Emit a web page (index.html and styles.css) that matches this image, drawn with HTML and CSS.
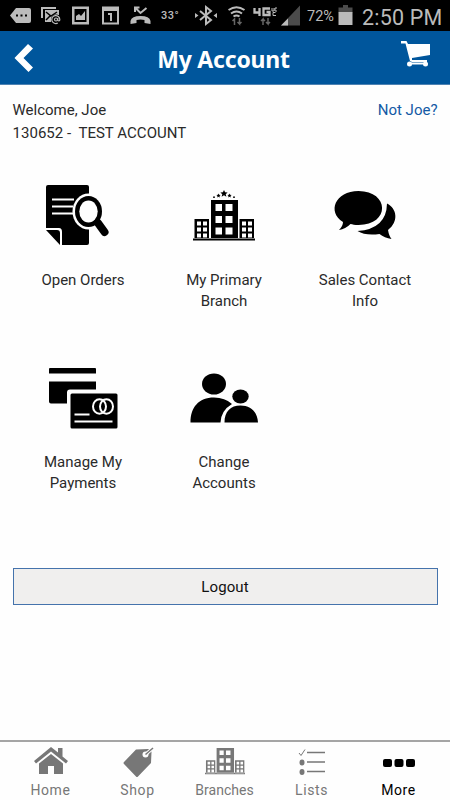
FILE: index.html
```html
<!DOCTYPE html>
<html lang="en">
<head>
<meta charset="utf-8">
<title>My Account</title>
<link rel="stylesheet" href="styles.css">
</head>
<body>
<svg class="defs" aria-hidden="true">
  <symbol id="building" viewBox="0 0 62 51">
    <path fill-rule="evenodd" d="M18 10h27v39h-27zM22.500 14v7h6.500v-7zM32.500 14v7h7v-7zM22.500 26v7h6.500v-7zM32.500 26v7h7v-7zM22.500 37.500v7h6.500v-7zM32.500 37.500v7h7v-7zM1.500 29h14.500v20h-14.500zM4 31.500v4h4v-4zM10 31.500v4h4v-4zM4 37.500v4h4v-4zM10 37.500v4h4v-4zM4 43.500v4h4v-4zM10 43.500v4h4v-4zM46.500 29h14.500v20h-14.500zM49 31.500v4h4v-4zM55 31.500v4h4v-4zM49 37.500v4h4v-4zM55 37.500v4h4v-4zM49 43.500v4h4v-4zM55 43.500v4h4v-4zM0 48.500h62v2h-62z"/>
  </symbol>
</svg>
<div class="status">
  <svg width="22" height="31" viewBox="10 0 22 31"><path d="M16 8h13q2 0 2 2v11q0 2-2 2h-13l-6-7.500z"/><path class="cut" d="M16 14.500h2v2h-2zm4.500 0h2v2h-2zm4.500 0h2v2h-2z"/></svg>
  <svg width="22" height="31" viewBox="41 0 22 31"><path d="M41 7h15v2h-13v9h-2z"/><path d="M45 10h14v5h-3l-5 7h-6z"/><path class="cut-line" d="M46 12l5 4 6-4M46 20l4-4"/><circle class="cut" cx="56" cy="19.500" r="5"/><g class="line"><circle cx="56" cy="19.500" r="1.500"/><path d="M57.800 18v2.500q2 1 2-1a4 4 0 1 0-2 3.500"/></g></svg>
  <svg width="18" height="31" viewBox="72 0 18 31"><path fill-rule="evenodd" d="M72 6.500h17v18h-17zM74.500 9v13h12v-13z"/><path d="M76 20v-4l3-2 2 2 4-5v9z"/></svg>
  <svg width="18" height="31" viewBox="102 0 18 31"><path fill-rule="evenodd" d="M102 6.500h17v18h-17zM104 11v11.500h13v-11.500z"/><path d="M108 13h4v8h-2v-6h-2z"/></svg>
  <svg width="22" height="31" viewBox="130 0 22 31"><path d="M130.500 21q1-5 10-5t10 5v3l-6-1v-3q-4-1-8 0v3l-6 1z"/><path class="line thick" d="M135 12v-4.500h4.500M135.500 8l5 5 6-5"/></svg>
  <span class="temp">33°</span>
  <svg width="22" height="31" viewBox="195 0 22 31"><path class="line thick" d="M200 11l11 9-5 4v-17l5 4-11 9"/><path d="M195 13l3.500 2.500-3.500 2.500zM217 13l-3.500 2.500 3.500 2.500z"/></svg>
  <svg width="18" height="31" viewBox="228 0 18 31"><path class="line thick" d="M228.500 10q8-5.500 16 0M231 13.500q5.500-4 11 0M233.500 16.500q3-2 6 0"/><path class="line dim" d="M234.500 25v-6l-2 2M239.500 18v6l-2-2m2 2l2-2"/></svg>
  <svg width="25" height="31" viewBox="253 0 25 31"><path class="line heavy" d="M254.500 8v4.500h6M259.500 8v8M270 8.500h-6.500v6.500h6v-3h-3"/><path class="line small" d="M272 8v3h2v-3M277 8h-2v3h2M275.500 12.500h-2.500v3h3"/><path class="line dim" d="M263 25v-6l-2 2m2-2l2 2M268 18v6l-2-2m2 2l2-2"/></svg>
  <svg width="20" height="31" viewBox="281 0 20 31"><path class="dark" d="M281 25.500l19-20v20z"/><path d="M281 25.500l7-7v7z"/></svg>
  <span class="percent">72%</span>
  <svg width="15" height="31" viewBox="338 0 15 31"><path class="dark" d="M343 5h5v2.500h4.500v5h-14v-5h4.500z"/><path d="M338.500 12h14v13h-14z"/></svg>
  <span class="clock">2:50 PM</span>
</div>
<header class="header">
  <svg width="24" height="32" viewBox="12 42 24 32"><path d="M28 44l5 4.500-9.500 9.500 9.500 9.500-4.500 4.500-14-14z"/></svg>
  <h1>My Account</h1>
  <svg width="34" height="32" viewBox="399 39 34 32"><path d="M401 41h5.500l1.500 3h22v11l-18 3v2h15v2h-15l-2-1-4.500-17.500h-4.500z"/><circle cx="409.500" cy="64" r="2.500"/><circle cx="425.500" cy="64" r="2.500"/><path d="M409 62.500h17v2h-17z"/></svg>
</header>
<main class="content">
  <div class="welcome">
    <p>Welcome, Joe<br><span class="account">130652 -&nbsp; TEST ACCOUNT</span></p>
    <a>Not Joe?</a>
  </div>
  <div class="tiles">
    <div class="tile">
      <svg viewBox="43 180 80 70"><path d="M48 185h39q2 0 2 2v56q0 2-2 2h-25v-13q0-4-3-4h-13v-41q0-2 2-2zM46 230h11q3 0 3 3v12z"/><path class="white-line" d="M52 199.500h22M52 206.500h21M52 213.500h21"/><ellipse class="white" cx="88.500" cy="211.500" rx="16" ry="18"/><path class="white-line halo" d="M98 223l8 10"/><ellipse cx="88.500" cy="211.500" rx="13.500" ry="15.500"/><ellipse class="white" cx="88.500" cy="211.500" rx="9.200" ry="11"/><path class="handle" d="M98 223l6.500 9"/></svg>
      <span>Open Orders</span>
    </div>
    <div class="tile">
      <svg viewBox="184 180 80 70"><use href="#building" x="193" y="190" width="62" height="51"/><path d="M224 190l1.100 2.300 2.500.2-1.900 1.700.7 2.500-2.400-1.400-2.400 1.400.7-2.500-1.900-1.700 2.500-.2zM218.500 193.500l.6 1.300 1.500.2-1.100 1 .3 1.500-1.300-.8-1.300.8.3-1.500-1.100-1 1.500-.2zM229.500 193.500l.6 1.300 1.500.2-1.100 1 .3 1.500-1.300-.8-1.300.8.3-1.500-1.100-1 1.500-.2z"/><circle cx="214" cy="197.200" r=".9"/><circle cx="234" cy="197.200" r=".9"/></svg>
      <span>My Primary<br>Branch</span>
    </div>
    <div class="tile">
      <svg viewBox="325 180 80 70"><path d="M387 203.500c10 5 12 18 1 26.500q1 6 3.500 9-7-1-12-5-14 2-22-3 29-2 29.500-27.500zM358.500 191c31 0 32 34 0 34-4 0-6-.5-8-1q-5 5-11.500 6 4-4 4-8c-16-10-8-31 15.500-31z"/></svg>
      <span>Sales Contact<br>Info</span>
    </div>
    <div class="tile">
      <svg viewBox="43 362.500 80 70"><path d="M50 367.500h45q1 0 1 1v4.500h-47v-4.500q0-1 1-1zM49 381h47v8h-26q-3 0-3 3v11h-16q-2 0-2-2zM72 393h44q1.500 0 1.500 1.500v32q0 1.500-1.500 1.500h-44q-1.500 0-1.500-1.500v-32q0-1.500 1.500-1.500z"/><path class="white-line" d="M74.500 414h15M74.500 421h38"/><g class="rings"><ellipse cx="99.500" cy="406" rx="6.500" ry="7.300"/><ellipse cx="106.500" cy="406" rx="6.500" ry="7.300"/></g></svg>
      <span>Manage My<br>Payments</span>
    </div>
    <div class="tile">
      <svg viewBox="184 362.500 80 70"><ellipse cx="214" cy="383.500" rx="12" ry="10.500"/><ellipse cx="240.500" cy="396" rx="8.200" ry="7"/><path d="M190.500 422c0-15 8-25 23.500-25q11 0 18 6.500-11 6.500-11.500 18.500zM224.500 422c0-11 6-17 16-17s17 6 17.500 17z"/></svg>
      <span>Change<br>Accounts</span>
    </div>
  </div>
  <button class="logout">Logout</button>
</main>
<nav class="tabs">
  <div class="tab"><svg viewBox="31 745 40 34"><path d="M51 747l7 5.500v-4.500h4.500v8.500l5.500 4.500-2 2.500-15-12-15 12-2-2.500zM51 754l12 9.500v10.500h-9v-8h-6v8h-9v-10.500z"/></svg><span>Home</span></div>
  <div class="tab"><svg viewBox="118 745 40 34"><path d="M136 749.500l12-.5q3 0 3.500 3l-.5 11-13 13.500q-1 1-2 0l-12-12.500q-1-1 0-2z"/><circle class="hole" cx="145.500" cy="754.500" r="3"/><path class="tag-gap" d="M145.500 754.500l7.500-6.500"/><path class="tag-line" d="M145.500 754.500l7.500-6.500"/></svg><span>Shop</span></div>
  <div class="tab branches"><svg viewBox="205 745 40 34"><use href="#building" x="205" y="741" width="40" height="34"/></svg><span>Branches</span></div>
  <div class="tab"><svg viewBox="292 745 40 34"><path class="tag-line" d="M307 752.500h18M307 762h18M307 771.500h18"/><path class="check" d="M299 753l2 2.500 4-6"/><ellipse cx="302" cy="762.500" rx="2.500" ry="3"/><ellipse cx="302" cy="772" rx="2.500" ry="3"/></svg><span>Lists</span></div>
  <div class="tab active"><svg viewBox="379 745 40 34"><rect x="383" y="759" width="9" height="8" rx="2"/><rect x="394.500" y="759" width="9" height="8" rx="2"/><rect x="406" y="759" width="9" height="8" rx="2"/></svg><span>More</span></div>
</nav>
</body>
</html>
```

FILE: styles.css
```css
* { box-sizing: border-box; }
body {
  margin: 0;
  width: 450px;
  height: 800px;
  display: flex;
  flex-direction: column;
  background: #fefefe;
  color: #2a2a2a;
  font: 15px/21px Roboto, sans-serif;
  overflow: hidden;
}
svg { display: block; }
.defs { width: 0; height: 0; position: absolute; }
.status {
  height: 31px;
  flex: none;
  padding-left: 10px;
  display: grid;
  grid-template-columns: 31px 31px 30px 28px 31px 34px 33px 25px 28px 26px 31px 24px 88px;
  background: #000;
  color: #bbb;
  fill: #bbb;
  line-height: 31px;
  white-space: nowrap;
}
.cut { fill: #000; }
.cut-line { fill: none; stroke: #000; stroke-width: 1.5; }
.line { fill: none; stroke: #bbb; stroke-width: 1.2; }
.thick { stroke-width: 2; }
.heavy { stroke-width: 2.3; }
.small { stroke-width: 1; }
.dim { stroke: #666; stroke-width: 1.5; }
.dark { fill: #4b4b4b; }
.temp { font-size: 11px; font-weight: 500; letter-spacing: .5px; }
.percent { font-size: 14.5px; line-height: 33px; }
.clock { font-size: 21.5px; line-height: 35px; letter-spacing: .2px; }
.header {
  height: 54px;
  flex: none;
  padding: 0 17px 0 12px;
  display: grid;
  grid-template-columns: 34px 1fr 34px;
  background: #00569c;
  border-bottom: 1px solid #4e82b2;
  fill: #fff;
}
.header svg { margin-top: 11px; }
.header svg:last-child { margin-top: 8px; }
.header h1 {
  margin: 0;
  padding-left: 2px;
  color: #fff;
  font: bold 23px/57px "Noto Sans", sans-serif;
  letter-spacing: -.2px;
  text-align: center;
}
.content { flex: 1; padding: 14px 12.5px 0; }
.welcome { display: flex; justify-content: space-between; line-height: 22.5px; }
.welcome p { margin: 0; }
.welcome a { color: #135aa5; }
.account { letter-spacing: .03px; }
.tiles {
  margin-top: 36px;
  display: grid;
  grid-template-columns: repeat(3, 141px);
  grid-auto-rows: 182.5px;
}
.tile { display: flex; flex-direction: column; align-items: center; text-align: center; }
.tile svg { width: 80px; height: 70px; margin-bottom: 19.5px; fill: #000; }
.tile .white { fill: #fefefe; }
.white-line { fill: none; stroke: #fefefe; stroke-width: 2.2; }
.halo { stroke-width: 11; stroke-linecap: round; }
.handle { fill: none; stroke: #000; stroke-width: 8; stroke-linecap: round; }
.rings { fill: none; stroke: #fefefe; stroke-width: 2; }
.logout {
  display: block;
  width: 425px;
  height: 37px;
  margin-top: 23px;
  padding: 0;
  border: 1px solid #4573ac;
  background: #f0efee;
  color: #111;
  font: 15px/37px Roboto, sans-serif;
  letter-spacing: .1px;
}
.tabs {
  height: 60px;
  flex: none;
  padding: 3px 7px 0;
  display: grid;
  grid-template-columns: repeat(5, 87px);
  border-top: 2px solid #a5a5a5;
  color: #777;
  fill: #777;
  font-size: 14px;
  letter-spacing: .6px;
}
.tab { display: flex; flex-direction: column; align-items: center; }
.tab svg { width: 40px; height: 34px; }
.tab span { line-height: 22px; }
.branches span { letter-spacing: .05px; }
.active { color: #000; fill: #000; }
.tag-line { fill: none; stroke: #777; stroke-width: 1.5; }
.tag-gap { fill: none; stroke: #fefefe; stroke-width: 3.5; }
.hole { fill: #fefefe; }
.check { fill: none; stroke: #777; stroke-width: 1; }
```
